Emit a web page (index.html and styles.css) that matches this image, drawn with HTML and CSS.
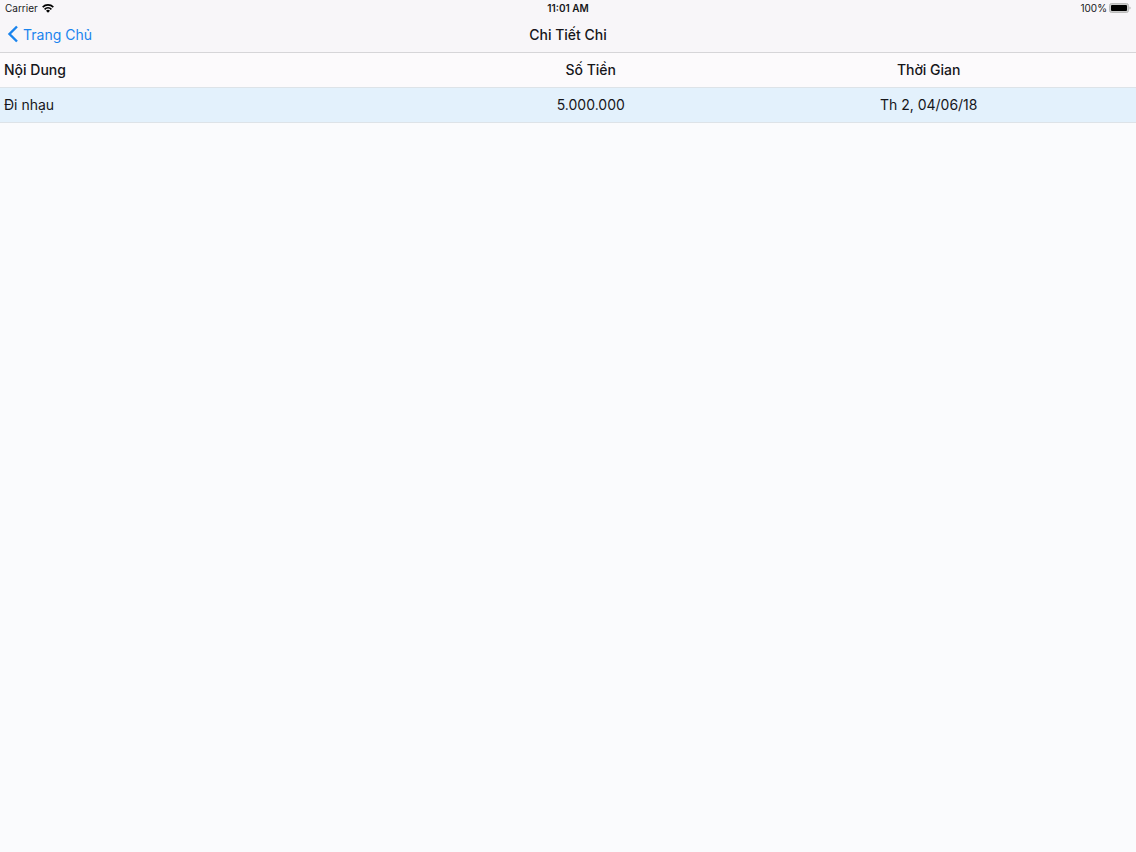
FILE: index.html
```html
<!DOCTYPE html>
<html lang="vi">
<head>
  <meta charset="UTF-8" />
  <meta name="viewport" content="width=device-width, initial-scale=1.0"/>
  <title>Chi Tiết Chi</title>
  <link rel="stylesheet" href="styles.css">
</head>
<body>

<header class="top">
  <div class="status">
    <div class="carrier">
      <span>Carrier</span>
      <svg width="12" height="9" viewBox="0 0 12 9" aria-hidden="true">
        <path d="M6 8.8 4 6.8a2.8 2.8 0 0 1 4 0z" fill="#000"/>
        <path d="M2.6 5.3a4.9 4.9 0 0 1 6.8 0M.7 3.1a7.6 7.6 0 0 1 10.6 0" fill="none" stroke="#000" stroke-width="1.7"/>
      </svg>
    </div>
    <div class="clock">11:01 AM</div>
    <div class="battery">
      <span>100%</span>
      <svg width="22" height="10" viewBox="0 0 22 10" aria-hidden="true">
        <rect x=".5" y=".5" width="19" height="9" rx="2" fill="#ccc" stroke="#bbb"/>
        <rect x="2" y="2" width="16" height="6" rx="1" fill="#000"/>
        <path d="M20.5 3.5a1.6 1.6 0 0 1 0 3z" fill="#aaa"/>
      </svg>
    </div>
  </div>

  <nav class="navbar">
    <a class="back" href="#">
      <svg width="12" height="18" viewBox="0 0 12 18" aria-hidden="true">
        <path d="M10 1.5 2.5 9l7.5 7.5" fill="none" stroke="#1a84ee" stroke-width="2.4"/>
      </svg>
      <span>Trang Chủ</span>
    </a>
    <h1 class="title">Chi Tiết Chi</h1>
  </nav>
</header>

<main>
  <table class="list">
    <thead>
      <tr>
        <th class="content" scope="col">Nội Dung</th>
        <th class="money" scope="col">Số Tiền</th>
        <th class="time" scope="col">Thời Gian</th>
      </tr>
    </thead>
    <tbody>
      <tr>
        <td class="content">Đi nhạu</td>
        <td class="money">5.000.000</td>
        <td class="time">Th 2, 04/06/18</td>
      </tr>
    </tbody>
  </table>
</main>

</body>
</html>
```

FILE: styles.css
```css
body {
  margin: 0;
  font-family: Inter, "Liberation Sans", sans-serif;
  font-size: 14px;
  color: #16161a;
  background-color: #fafbfd;
}
.top {
  background-color: #f8f6f9;
  border-bottom: 1px solid #d6d5d8;
}
.status,
.navbar {
  display: grid;
  grid-template-columns: 1fr auto 1fr;
  align-items: center;
}
.status {
  padding: 0 5px;
  font-size: 10px;
  line-height: 16px;
}
.carrier,
.battery,
.back {
  display: flex;
  align-items: center;
  gap: 4px;
}
.clock {
  font-weight: 600;
}
.battery {
  justify-content: flex-end;
  gap: 2px;
}
.navbar {
  height: 36px;
  padding: 0 7px;
}
.back {
  justify-self: start;
  color: #1a84ee;
  text-decoration: none;
}
.title {
  margin: 0;
  font-size: 14px;
  font-weight: 500;
}
.list {
  width: 100%;
  table-layout: fixed;
  border-collapse: separate;
  border-spacing: 0;
}
.list th,
.list td {
  height: 34px;
  padding: 0;
  line-height: 18px;
  text-align: center;
  border-bottom: 1px solid #dde3e8;
}
.list th {
  font-weight: 500;
  background-color: #fcfafc;
}
.list td {
  background-color: #e3f1fc;
}
.list .content {
  padding-left: 4px;
  text-align: left;
}
.list .money {
  width: 23%;
}
.list .time {
  width: 36.5%;
}
```
